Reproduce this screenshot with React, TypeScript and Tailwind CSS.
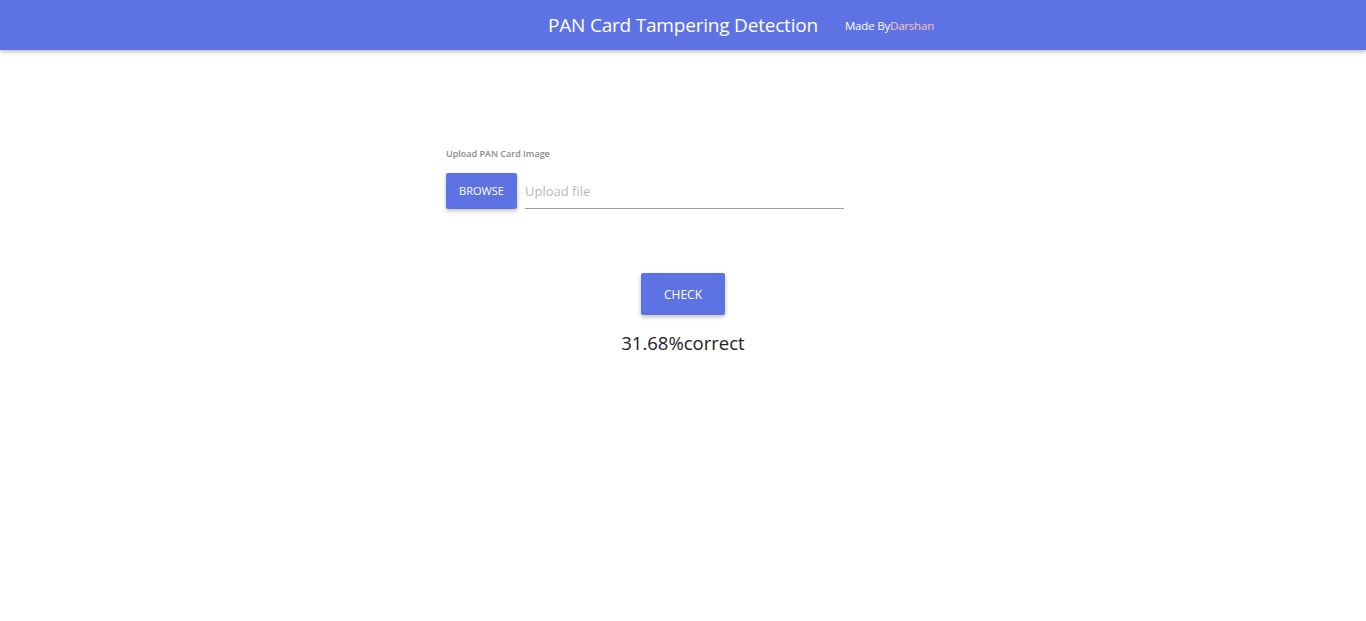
export default function App() {
  return (
    <div className="min-h-[621px] bg-white font-['Open_Sans',sans-serif]">
      <header className="flex h-[50px] items-center bg-[#5e73e3] pl-[548px] shadow-[0_2px_4px_rgba(0,0,0,0.25)]">
        <h1 className="text-[19px] font-normal tracking-[-0.2px] text-white">PAN Card Tampering Detection</h1>
        <div className="ml-[27px] mt-[2px] text-[11.5px] tracking-[-0.2px] text-white">
          Made By<span className="text-[#ffc3b4]">Darshan</span>
        </div>
      </header>

      <main className="pt-[97px]">
        <div className="ml-[446px] w-[398px]">
          <label className="block text-[9px] font-semibold leading-[14px] text-[#8a8a8a]">Upload PAN Card Image</label>
          <div className="mt-[11px] flex items-end gap-[8px]">
            <button className="h-[36px] w-[71px] rounded-[2px] bg-[#5e73e3] text-[11px] font-medium text-white shadow-[0_2px_4px_rgba(0,0,0,0.25)]">
              BROWSE
            </button>
            <input
              readOnly
              placeholder="Upload file"
              className="h-[37px] flex-1 border-b border-[#9e9e9e] bg-transparent pt-[2px] text-[13px] text-[#333] outline-none placeholder:text-[#b8b8b8]"
            />
          </div>
        </div>

        <div className="mt-[64px] flex flex-col items-center">
          <button className="h-[42px] w-[84px] rounded-[2px] bg-[#5e73e3] pt-[2px] text-[12px] text-white shadow-[0_2px_4px_rgba(0,0,0,0.25)]">
            CHECK
          </button>
          <p className="mt-[14px] text-[18.5px] text-[#222]">31.68%correct</p>
        </div>
      </main>
    </div>
  );
}
